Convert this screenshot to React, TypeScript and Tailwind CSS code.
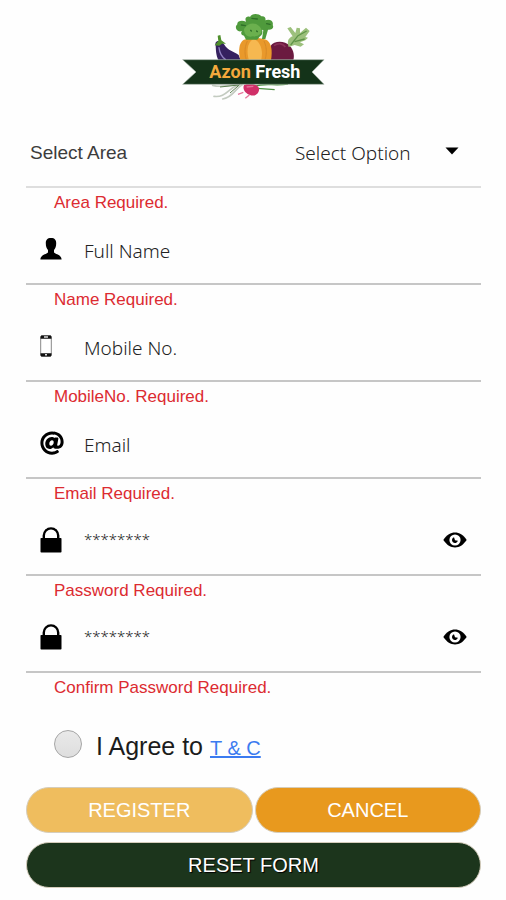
import { useState } from "react";
import type { ReactNode } from "react";
import { FaAt } from "react-icons/fa";

function Logo() {
  return (
    <svg viewBox="-3 0 510 315" className="h-[105px] w-[170px]" role="img" aria-label="Azon Fresh">
      {/* aubergine */}
      <path d="M137 122C132 105 152 103 162 118C174 138 192 140 206 150L214 172H150C138 158 138 138 137 122Z" fill="#35215f" />
      <path d="M147 128C149 145 156 156 166 163" stroke="#8f7fc0" strokeWidth="4" fill="none" strokeLinecap="round" />
      <path d="M134 121L145 108L143 92L151 90L154 106L168 116L156 116L148 122Z" fill="#4f8f2c" />
      {/* beetroot */}
      <path d="M302 172V122C312 106 345 106 359 122C372 136 375 155 368 172Z" fill="#6b1a40" />
      <path d="M312 122C326 112 340 116 346 126" stroke="#8a3258" strokeWidth="5" fill="none" />
      <path d="M356 126C350 108 356 98 368 94L352 70L362 66L376 84L380 68L390 70L390 84L408 68L419 78L406 96L414 98L406 106L390 112L402 118L392 125L374 120Z" fill="#9cc07c" />
      <path d="M362 120L384 92L410 78M374 110L404 102" stroke="#5f9448" strokeWidth="4" fill="none" />
      {/* pumpkin */}
      <path d="M212 170C204 140 206 112 222 104C244 96 272 98 288 104C306 112 308 142 302 170Z" fill="#e9992b" />
      <path d="M238 170C228 140 232 112 250 102C272 108 282 140 272 170Z" fill="#f6b850" />
      <path d="M232 108C222 130 224 150 230 168M282 108C292 130 290 150 284 168" stroke="#d88a26" strokeWidth="3" fill="none" />
      {/* broccoli */}
      <path d="M228 104L222 92C212 90 212 82 216 78C200 84 192 66 202 58C200 48 216 44 228 50C222 36 234 32 240 36C244 24 266 24 274 34C286 32 288 42 286 46C298 40 312 48 308 60C314 70 302 76 294 74L286 102H276L280 76L276 74C280 86 274 92 268 96L262 104Z" fill="#4f9a3c" />
      <path d="M222 72C236 50 262 50 274 72C278 90 258 96 248 94C232 98 222 88 222 72Z" fill="#6bb04e" />
      <path d="M214 60L226 62M246 40L262 42M290 56L300 58M242 76L244 78M260 78L262 80" stroke="#2f6f28" strokeWidth="4" strokeLinecap="round" />
      {/* radish and roots */}
      <path d="M128 241C158 250 182 238 216 236M132 274C168 278 172 252 204 240M158 282C188 278 196 250 216 240" stroke="#c3cbc0" strokeWidth="5" fill="none" strokeLinecap="round" />
      <path d="M150 246L206 240M180 264L210 238" stroke="#5d8052" strokeWidth="3" fill="none" />
      <path d="M252 244C290 232 310 244 354 237M262 250L314 254" stroke="#4d9141" strokeWidth="4" fill="none" />
      <path d="M222 240C236 232 262 236 267 250C269 266 254 276 240 270C228 266 216 254 222 240Z" fill="#d02f68" />
      <path d="M220 262L204 268M238 270L226 280M230 246L250 244" stroke="#e5769c" strokeWidth="4" fill="none" />
      {/* ribbon */}
      <path d="M38 164H462L426 201L462 238H38L78 201Z" fill="#143319" stroke="#a9b7aa" strokeWidth="2" />
      <text x="118" y="220" fontSize="54" className="font-['Roboto',sans-serif] font-bold" fill="#f3a93c">
        Azon
      </text>
      <text x="256" y="220" fontSize="54" className="font-['Roboto',sans-serif] font-bold" fill="#ffffff">
        Fresh
      </text>
    </svg>
  );
}

function PersonIcon() {
  return (
    <svg viewBox="0 0 22 22" className="h-[22px] w-[22px]" fill="#000" aria-hidden="true">
      <path d="M11 0C14.8 0 16.2 2 16.2 5.2C16.2 8.4 15.4 10.4 14 12V14.2C14.4 16 21.6 16.4 21.6 21.5H0.4C0.4 16.4 7.6 16 8 14.2V12C6.6 10.4 5.8 8.4 5.8 5.2C5.8 2 7.2 0 11 0Z" />
    </svg>
  );
}

function PhoneIcon() {
  return (
    <svg viewBox="0 0 12 22" className="h-[22px] w-[12px]" aria-hidden="true">
      <rect x="0.7" y="0.7" width="10.6" height="20.6" rx="1.2" fill="#fff" stroke="#888" strokeWidth="1" />
      <path d="M1.5 0.5H10.5Q11.5 0.5 11.5 3.8H0.5Q0.5 0.5 1.5 0.5ZM0.5 18.2H11.5Q11.5 21.5 10.5 21.5H1.5Q0.5 21.5 0.5 18.2Z" fill="#111" />
      <path d="M4 2H8M5 19.8H7" stroke="#ddd" strokeWidth="1.4" />
    </svg>
  );
}

function LockIcon() {
  return (
    <svg viewBox="0 0 22 26" className="h-[26px] w-[22px]" aria-hidden="true">
      <rect x="0.5" y="11" width="21" height="14.5" rx="0.8" fill="#000" />
      <path d="M3.8 12V8.6A7.2 7.2 0 0 1 18.2 8.6V12" fill="none" stroke="#000" strokeWidth="2.4" />
    </svg>
  );
}

function EyeIcon() {
  return (
    <svg viewBox="0 0 24 16" className="h-4 w-6" aria-hidden="true">
      <path d="M0.3 8C4 2.8 7.6 0.6 12 0.6S20 2.8 23.7 8C20 13.2 16.4 15.4 12 15.4S4 13.2 0.3 8Z" fill="#000" />
      <circle cx="12" cy="8" r="5.6" fill="#fff" />
      <path d="M11 5.2A3 3 0 1 0 14.9 8.8L12 8.2Z" fill="#000" />
    </svg>
  );
}

function ErrorText({ children }: { children: ReactNode }) {
  return <p className="h-8 pl-7 text-[17px] leading-[30px] text-[#dc2b31]">{children}</p>;
}

type FieldProps = {
  id: string;
  label: string;
  placeholder: string;
  error: string;
  icon: ReactNode;
  type?: string;
};

function Field({ id, label, placeholder, error, icon, type = "text" }: FieldProps) {
  const [visible, setVisible] = useState(false);
  const secret = type === "password";
  return (
    <div>
      <div className="flex h-[65px] items-center border-b-2 border-[#c6c6c6] px-3.5">
        <label htmlFor={id} aria-label={label} className="mr-5 w-6 shrink-0 pb-1.5">
          {icon}
        </label>
        <input
          id={id}
          type={secret && visible ? "text" : type}
          placeholder={placeholder}
          className={`min-w-0 flex-1 bg-transparent font-['Noto_Sans',sans-serif] font-light text-[#222] outline-none placeholder:text-[#222] ${
            secret ? "pb-1.5 text-[15px]" : "text-[19px]"
          }`}
        />
        {secret && (
          <button type="button" aria-label={`Show ${label}`} onClick={() => setVisible(!visible)} className="pb-1.5">
            <EyeIcon />
          </button>
        )}
      </div>
      <ErrorText>{error}</ErrorText>
    </div>
  );
}

const pill = "h-[46px] rounded-full border border-[#d5cdbc] text-[20px] text-white";

export default function App() {
  return (
    <main className="min-h-screen bg-[#fefefe] pr-[25px] pb-3 pl-[26px] font-['Liberation_Sans',Arial,sans-serif]">
      <header className="flex h-[123px] justify-center pt-[5px]">
        <Logo />
      </header>
      <form onSubmit={(e) => e.preventDefault()}>
        <div className="flex h-[65px] items-center justify-between border-b-2 border-[#dedede] pr-[22px] pb-0.5 pl-1">
          <label htmlFor="area" className="text-[19px] text-[#3c3c3c]">
            Select Area
          </label>
          <div className="relative">
            <select
              id="area"
              className="w-[164px] appearance-none bg-transparent font-['Noto_Sans',sans-serif] text-[19px] font-light text-[#222] outline-none"
            >
              <option>Select Option</option>
            </select>
            <svg viewBox="0 0 14 8" className="pointer-events-none absolute top-2 right-0 h-2 w-3.5" aria-hidden="true">
              <path d="M0.5 0.5H13.5L7 7.5Z" fill="#000" />
            </svg>
          </div>
        </div>
        <ErrorText>Area Required.</ErrorText>

        <Field id="name" label="Full Name" placeholder="Full Name" error="Name Required." icon={<PersonIcon />} />
        <Field id="mobile" label="Mobile No." placeholder="Mobile No." error="MobileNo. Required." icon={<PhoneIcon />} />
        <Field
          id="email"
          label="Email"
          placeholder="Email"
          error="Email Required."
          icon={<FaAt className="h-6 w-6 text-black" aria-hidden="true" />}
        />
        <Field id="password" label="Password" type="password" placeholder="********" error="Password Required." icon={<LockIcon />} />
        <Field
          id="confirm"
          label="Confirm Password"
          type="password"
          placeholder="********"
          error="Confirm Password Required."
          icon={<LockIcon />}
        />

        <div className="flex h-[82px] items-center pb-1 pl-7">
          <input
            id="agree"
            type="radio"
            className="mr-3.5 h-7 w-7 appearance-none rounded-full border border-[#a5a5a5] bg-linear-to-b from-[#e9e9e9] to-[#dedede] checked:border-8"
          />
          <label htmlFor="agree" className="pt-1.5 text-[25px] leading-8 text-[#1c1c1c]">
            I Agree to{" "}
            <a href="#terms" className="text-[20px] text-[#3b7bf0] underline">
              T &amp; C
            </a>
          </label>
        </div>

        <div className="grid grid-cols-2 gap-x-0.5 gap-y-[9px]">
          <button type="submit" className={`${pill} bg-[#efbd5e]`}>
            REGISTER
          </button>
          <button type="button" className={`${pill} bg-[#e8991e]`}>
            CANCEL
          </button>
          <button type="reset" className={`${pill} col-span-2 bg-[#1c351c] text-shadow-[1px_1px_1px_#000]`}>
            RESET FORM
          </button>
        </div>
      </form>
    </main>
  );
}
